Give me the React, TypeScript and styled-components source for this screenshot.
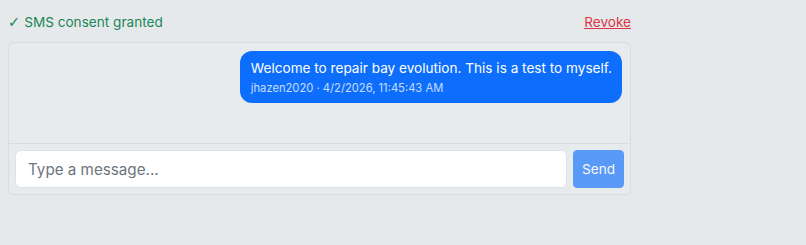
import React from "react";
import styled, { createGlobalStyle } from "styled-components";

const GlobalStyle = createGlobalStyle`
  html, body {
    margin: 0;
    padding: 0;
    background: #e6e9ec;
    font-family: Inter, "Noto Sans", sans-serif;
  }
`;

const Page = styled.div`
  padding: 8px;
  width: 623px;
`;

const ConsentBar = styled.div`
  display: flex;
  justify-content: space-between;
  align-items: center;
  height: 28px;
  margin-bottom: 6px;
  font-size: 13.6px;
  line-height: 20px;
`;

const ConsentText = styled.span`
  display: flex;
  align-items: center;
  color: #198754;
`;

const Check = styled.span`
  font-family: "DejaVu Sans", sans-serif;
  font-size: 14.5px;
  line-height: 1;
  margin-right: 4px;
`;

const RevokeLink = styled.a`
  color: #dc3545;
  text-decoration: underline;
  cursor: pointer;
`;

const Panel = styled.div`
  border: 1px solid #d9dde1;
  border-radius: 6px;
  background: #e8ebee;
  overflow: hidden;
`;

const Messages = styled.div`
  display: flex;
  flex-direction: column;
  align-items: flex-end;
  min-height: 84px;
  padding: 8px;
`;

const Bubble = styled.div<{ $mine?: boolean }>`
  background: ${(p) => (p.$mine ? "#0d6efd" : "#ffffff")};
  color: ${(p) => (p.$mine ? "#ffffff" : "#212529")};
  border-radius: 12px;
  padding: 7px 10px 7px 11px;
  max-width: 75%;
`;

const BubbleText = styled.div`
  font-size: 13.6px;
  line-height: 20px;
`;

const BubbleMeta = styled.div`
  font-size: 11.2px;
  line-height: 16px;
  margin-top: 2px;
  opacity: 0.75;
`;

const Composer = styled.form`
  display: flex;
  gap: 6px;
  padding: 6px;
  border-top: 1px solid #d9dde1;
`;

const MessageInput = styled.input`
  flex: 1;
  height: 38px;
  box-sizing: border-box;
  padding: 6px 12px;
  font-family: inherit;
  font-size: 15.2px;
  color: #212529;
  background: #ffffff;
  border: 1px solid #dee2e6;
  border-radius: 6px;
  outline: none;

  &::placeholder {
    color: #6c757d;
  }
`;

const SendButton = styled.button`
  height: 38px;
  padding: 0 8px;
  font-family: inherit;
  font-size: 13.6px;
  color: #ffffff;
  background: #0d6efd;
  border: 1px solid #0d6efd;
  border-radius: 4px;
  opacity: 0.65;
`;

export default function App() {
  return (
    <Page>
      <GlobalStyle />
      <ConsentBar>
        <ConsentText>
          <Check>✓</Check>SMS consent granted
        </ConsentText>
        <RevokeLink>Revoke</RevokeLink>
      </ConsentBar>
      <Panel>
        <Messages>
          <Bubble $mine>
            <BubbleText>Welcome to repair bay evolution. This is a test to myself.</BubbleText>
            <BubbleMeta>jhazen2020 · 4/2/2026, 11:45:43 AM</BubbleMeta>
          </Bubble>
        </Messages>
        <Composer onSubmit={(e) => e.preventDefault()}>
          <MessageInput placeholder="Type a message..." />
          <SendButton type="submit" disabled>
            Send
          </SendButton>
        </Composer>
      </Panel>
    </Page>
  );
}
